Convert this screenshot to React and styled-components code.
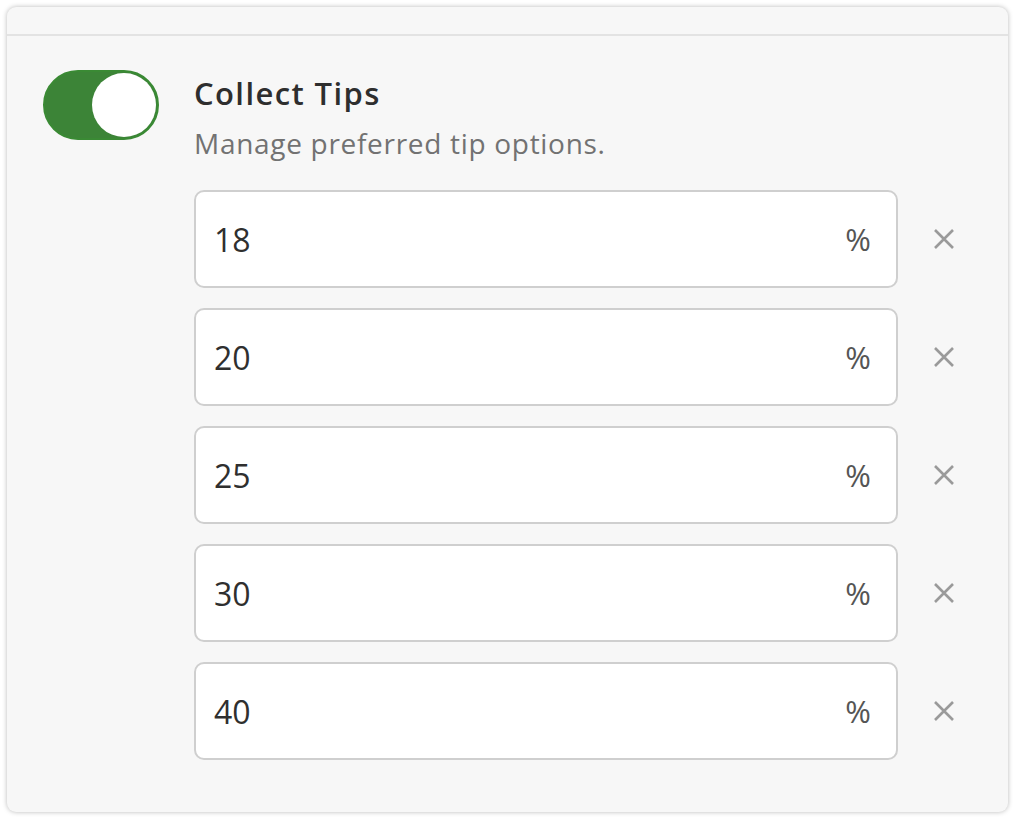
import React from 'react';
import styled, { createGlobalStyle } from 'styled-components';

const GlobalStyle = createGlobalStyle`
  body {
    margin: 0;
    background: #ffffff;
    font-family: "Open Sans", Lato, sans-serif;
  }
`;

const tips = ['18', '20', '25', '30', '40'];

export default function App() {
  return (<>
    <GlobalStyle />
    <Page>
      <Card>
        <TopBar />
        <Body>
          <Toggle aria-label="Collect Tips" aria-checked="true" role="switch">
            <Knob />
          </Toggle>
          <Main>
            <Title>Collect Tips</Title>
            <Subtitle>Manage preferred tip options.</Subtitle>
            <List>
              {tips.map((t) => (
                <Row key={t}>
                  <Field>
                    <Value>{t}</Value>
                    <Unit>%</Unit>
                  </Field>
                  <Remove aria-label="Remove">
                    <svg width="22" height="22" viewBox="0 0 22 22">
                      <path d="M2 2 L20 20 M20 2 L2 20" stroke="#9a9a9a" strokeWidth="2.6" strokeLinecap="butt" />
                    </svg>
                  </Remove>
                </Row>
              ))}
            </List>
          </Main>
        </Body>
      </Card>
    </Page>
  </>);
}

const Page = styled.div`
  padding: 7px 8px 8px 7px;
`;
const Card = styled.div`
  width: 1001px;
  height: 805px;
  box-sizing: border-box;
  background: #f7f7f7;
  border-radius: 9px;
  box-shadow: 0 0 5px rgba(0, 0, 0, 0.28);
  overflow: hidden;
`;
const TopBar = styled.div`
  height: 27px;
  border-bottom: 2px solid #e3e3e3;
`;
const Body = styled.div`
  display: flex;
  align-items: flex-start;
  padding: 34px 0 0 36px;
`;
const Toggle = styled.div`
  width: 116px;
  height: 70px;
  box-sizing: border-box;
  border-radius: 35px;
  background: #3c8437;
  border: 2px solid #3a8a34;
  display: flex;
  align-items: center;
  justify-content: flex-end;
  padding-right: 1px;
  flex-shrink: 0;
`;
const Knob = styled.div`
  width: 64px;
  height: 64px;
  border-radius: 50%;
  background: #ffffff;
`;
const Main = styled.div`
  margin-left: 35px;
  display: flex;
  flex-direction: column;
`;
const Title = styled.div`
  font-size: 31px;
  font-weight: 600;
  letter-spacing: 1.4px;
  color: #2e2e2e;
  line-height: 46px;
`;
const Subtitle = styled.div`
  font-size: 28px;
  letter-spacing: 0.7px;
  color: #727272;
  line-height: 46px;
  margin-top: 4px;
`;
const List = styled.div`
  display: flex;
  flex-direction: column;
  gap: 20px;
  margin-top: 24px;
`;
const Row = styled.div`
  display: flex;
  align-items: center;
`;
const Field = styled.div`
  width: 704px;
  height: 98px;
  box-sizing: border-box;
  background: #ffffff;
  border: 2px solid #cfcfcf;
  border-radius: 10px;
  display: flex;
  align-items: center;
  justify-content: space-between;
  padding: 0 25px 0 18px;
`;
const Value = styled.span`
  font-size: 32px;
  color: #2f2f2f;
`;
const Unit = styled.span`
  font-size: 31px;
  color: #555555;
`;
const Remove = styled.div`
  margin-left: 35px;
  width: 22px;
  height: 22px;
  display: flex;
`;
